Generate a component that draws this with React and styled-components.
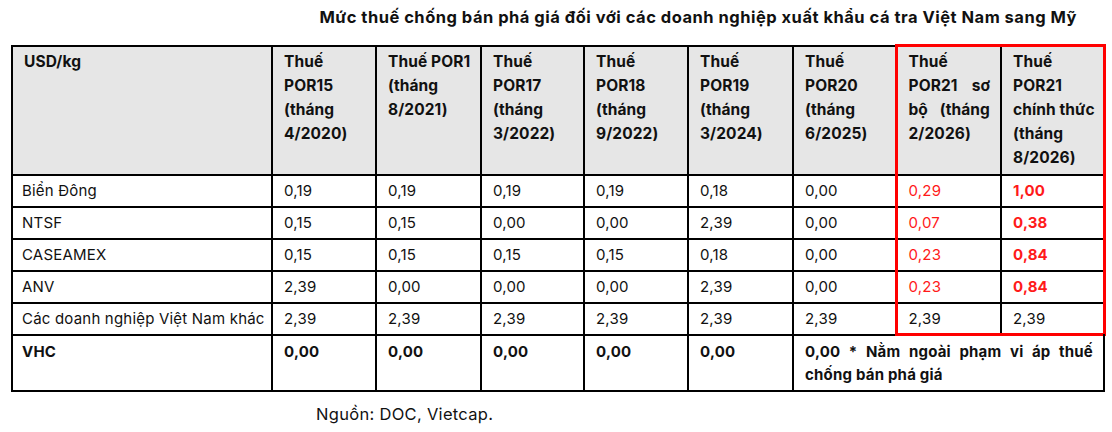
import React from "react";
import styled, { createGlobalStyle } from "styled-components";

const Global = createGlobalStyle`
  html, body { margin: 0; padding: 0; background: #ffffff; }
  body { font-family: Inter, "Noto Sans", "Liberation Sans", sans-serif; color: #111; }
`;

const Page = styled.div`
  width: 1112px;
  height: 432px;
  box-sizing: border-box;
  padding-top: 6px;
`;

const Title = styled.h1`
  margin: 0;
  height: 38px;
  padding-right: 35px;
  text-align: right;
  font-size: 16.5px;
  letter-spacing: 0.5px;
  font-weight: 700;
  line-height: 22px;
  color: #111;
`;

const TableWrap = styled.div`
  padding-left: 11px;
`;

const Table = styled.table`
  border-collapse: collapse;
  table-layout: fixed;
  width: 1092px;
  font-size: 15px;
  letter-spacing: 0.2px;
`;

const HeadCell = styled.th`
  background: #e6e6e6;
  border: 2px solid #000;
  height: 129px;
  box-sizing: border-box;
  padding: 3px 10px 0 11px;
  vertical-align: top;
  text-align: left;
  font-weight: 700;
  font-size: 15.5px;
  letter-spacing: 0.1px;
  line-height: 24px;
  color: #111;
  ${(p) => p.$redLeft && `border-left: 3px solid #ff0000;`}
  ${(p) => p.$redRight && `border-right: 3px solid #ff0000;`}
  ${(p) => p.$red && `border-top: 3px solid #ff0000;`}
`;

const Line = styled.span`
  display: block;
  white-space: nowrap;
  ${(p) => p.$justify && `text-align: justify; text-align-last: justify; white-space: normal;`}
`;

const Row = styled.tr`
  height: ${(p) => p.$h}px;
`;

const Cell = styled.td`
  border: 2px solid #000;
  padding: 0 8px 0 ${(p) => (p.$first ? 9 : 11)}px;
  vertical-align: ${(p) => (p.$top ? "top" : "middle")};
  padding-top: ${(p) => (p.$top ? "4px" : "0")};
  line-height: 23px;
  font-weight: ${(p) => (p.$bold ? 700 : 400)};
  color: ${(p) => (p.$red ? "#ff1a1a" : "#111")};
  white-space: nowrap;
  ${(p) => p.$redLeft && `border-left: 3px solid #ff0000;`}
  ${(p) => p.$redRight && `border-right: 3px solid #ff0000;`}
  ${(p) => p.$redBottom && `border-bottom: 3px solid #ff0000;`}
`;

const NoteCell = styled(Cell)`
  white-space: normal;
  text-align: justify;
  padding-right: 10px;
`;

const Source = styled.div`
  padding: 12px 0 0 316px;
  font-size: 16.5px;
  letter-spacing: 0.3px;
  line-height: 20px;
  color: #111;
`;

const widths = [260, 104, 105, 103, 104, 105, 103, 105, 103];

const headers = [
  [["USD/kg"]],
  [["Thuế"], ["POR15"], ["(tháng"], ["4/2020)"]],
  [["Thuế POR1"], ["(tháng"], ["8/2021)"]],
  [["Thuế"], ["POR17"], ["(tháng"], ["3/2022)"]],
  [["Thuế"], ["POR18"], ["(tháng"], ["9/2022)"]],
  [["Thuế"], ["POR19"], ["(tháng"], ["3/2024)"]],
  [["Thuế"], ["POR20"], ["(tháng"], ["6/2025)"]],
  [["Thuế"], ["POR21 sơ", true], ["bộ (tháng", true], ["2/2026)"]],
  [["Thuế"], ["POR21"], ["chính thức"], ["(tháng"], ["8/2026)"]],
];

const rows = [
  ["Biển Đông", "0,19", "0,19", "0,19", "0,19", "0,18", "0,00", "0,29", "1,00"],
  ["NTSF", "0,15", "0,15", "0,00", "0,00", "2,39", "0,00", "0,07", "0,38"],
  ["CASEAMEX", "0,15", "0,15", "0,15", "0,15", "0,18", "0,00", "0,23", "0,84"],
  ["ANV", "2,39", "0,00", "0,00", "0,00", "2,39", "0,00", "0,23", "0,84"],
  ["Các doanh nghiệp Việt Nam khác", "2,39", "2,39", "2,39", "2,39", "2,39", "2,39", "2,39", "2,39"],
];

export default function App() {
  return (
    <Page>
      <Global />
      <Title>Mức thuế chống bán phá giá đối với các doanh nghiệp xuất khẩu cá tra Việt Nam sang Mỹ</Title>
      <TableWrap>
        <Table>
          <colgroup>
            {widths.map((w, i) => (
              <col key={i} style={{ width: w }} />
            ))}
          </colgroup>
          <thead>
            <tr>
              {headers.map((lines, i) => (
                <HeadCell key={i} $red={i >= 7} $redLeft={i === 7} $redRight={i === 8}>
                  {lines.map(([t, j], k) => (
                    <Line key={k} $justify={j}>
                      {t}
                    </Line>
                  ))}
                </HeadCell>
              ))}
            </tr>
          </thead>
          <tbody>
            {rows.map((r, ri) => {
              const last = ri === rows.length - 1;
              return (
                <Row key={ri} $h={32}>
                  {r.map((v, ci) => (
                    <Cell
                      key={ci}
                      $first={ci === 0}
                      $red={!last && ci >= 7}
                      $bold={!last && ci === 8}
                      $redLeft={ci === 7}
                      $redRight={ci === 8}
                      $redBottom={last && ci >= 7}
                    >
                      {v}
                    </Cell>
                  ))}
                </Row>
              );
            })}
            <Row $h={56}>
              <Cell $top $bold $first>VHC</Cell>
              <Cell $top $bold>0,00</Cell>
              <Cell $top $bold>0,00</Cell>
              <Cell $top $bold>0,00</Cell>
              <Cell $top $bold>0,00</Cell>
              <Cell $top $bold>0,00</Cell>
              <NoteCell $top $bold colSpan={4}>
                <Line $justify>0,00 * Nằm ngoài phạm vi áp thuế</Line>
                <Line>chống bán phá giá</Line>
              </NoteCell>
            </Row>
          </tbody>
        </Table>
      </TableWrap>
      <Source>Nguồn: DOC, Vietcap.</Source>
    </Page>
  );
}
